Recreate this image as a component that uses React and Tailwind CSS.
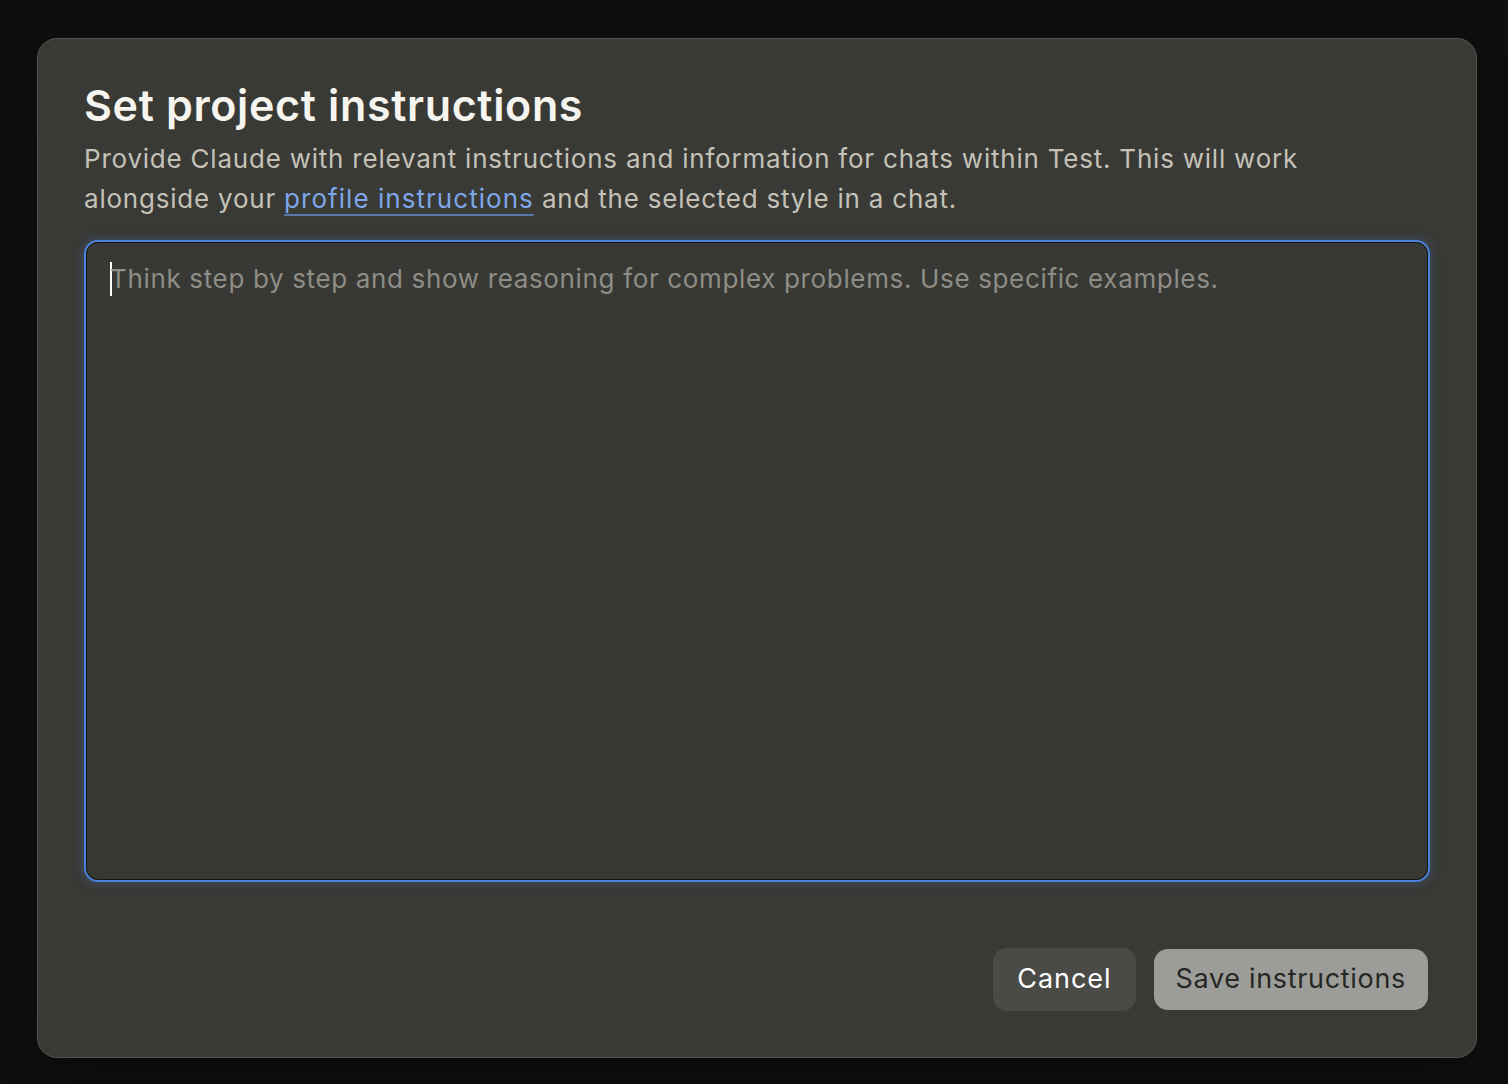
import React from 'react';

const font = { fontFamily: 'Inter, "Noto Sans", sans-serif' };

const InstructionsDialog = () => {
  return (
    <div className="w-[1440px] h-[1020px] rounded-[20px] border border-[#55554f] bg-[#393935] px-[46px] pt-[38px] pb-[46px] flex flex-col shadow-2xl">
      <h1 className="text-[43px] leading-[56px] font-semibold text-[#f5f4ee] tracking-[0.015em]">
        Set project instructions
      </h1>
      <p className="mt-[6px] text-[26px] leading-[40px] text-[#c4c2b8] tracking-[0.03em] pr-[80px]">
        Provide Claude with relevant instructions and information for chats within Test. This will work
        alongside your{' '}
        <a className="text-[#7ea6e8] tracking-[0.04em] underline decoration-[#5a78aa] underline-offset-[6px] decoration-[1.5px]">
          profile instructions
        </a>{' '}
        and the selected style in a chat.
      </p>

      {/* focused textarea with blue ring */}
      <div className="mt-[21px] h-[642px] rounded-[14px] border-2 border-[#4b82dc] shadow-[0_0_10px_2px_rgba(75,130,220,0.25)]">
        <div className="h-full rounded-[12px] border border-[#151513] bg-[#383834] px-[23px] pt-[17px] flex items-start">
          <span className="w-[2px] h-[34px] bg-white mt-[2px]" />
          <span className="text-[26px] leading-[38px] text-[#8e8d86] tracking-[0.025em] -ml-[2px]">
            Think step by step and show reasoning for complex problems. Use specific examples.
          </span>
        </div>
      </div>

      <div className="mt-auto flex justify-end gap-[18px] pr-[2px]">
        <button className="h-[63px] px-[24px] rounded-[14px] bg-[#4a4a47] text-[27px] tracking-[0.035em] text-white">
          Cancel
        </button>
        <button className="h-[61px] mt-[1px] px-[22px] rounded-[14px] bg-[#9c9c99] text-[27px] tracking-[0.025em] text-[#262624]">
          Save instructions
        </button>
      </div>
    </div>
  );
};

const App = () => {
  return (
    <div className="w-[1508px] h-[1084px] bg-[#0e0e0e] pl-[37px] pt-[38px] overflow-hidden" style={font}>
      <InstructionsDialog />
    </div>
  );
};

export default App;
